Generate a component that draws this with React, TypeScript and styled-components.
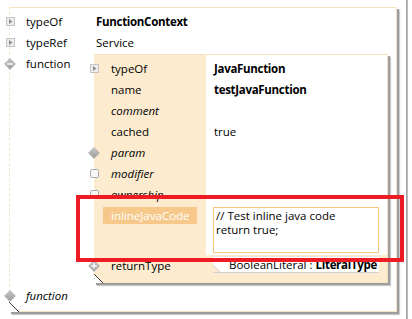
import styled, { createGlobalStyle } from 'styled-components';

const BEIGE = '#fcebcf';
const EDGE = '#f5e3c2';

const GlobalStyle = createGlobalStyle`
  html, body {
    margin: 0;
    padding: 0;
    background: #fff;
  }
  body {
    font-family: "Open Sans", "Noto Sans", sans-serif;
    font-size: 11.5px;
    color: #000;
  }
`;

const ExpandIcon = () => (
  <svg width="9" height="9" viewBox="0 0 9 9">
    <rect x="0.5" y="0.5" width="8" height="8" fill="#ededed" stroke="#c4c4c4" />
    <path d="M3 2 L6.5 4.5 L3 7 Z" fill="#8e8e8e" />
  </svg>
);

const CheckIcon = () => (
  <svg width="9" height="9" viewBox="0 0 9 9">
    <rect x="0.5" y="0.5" width="8" height="8" rx="1" fill="#f6f6f6" stroke="#a9a9a9" />
  </svg>
);

const Diamond = ({ mark }: { mark?: 'plus' | 'minus' }) => (
  <svg width="12" height="12" viewBox="0 0 12 12">
    <defs>
      <linearGradient id="diamond-fill" x1="0" y1="0" x2="0" y2="1">
        <stop offset="0" stopColor="#c6c6c6" />
        <stop offset="1" stopColor="#9a9a9a" />
      </linearGradient>
    </defs>
    <path
      d="M6 0.6 L11.4 6 L6 11.4 L0.6 6 Z"
      fill="url(#diamond-fill)"
      stroke="#adadad"
      strokeWidth="0.8"
      strokeLinejoin="round"
    />
    {mark && <rect x="3" y="5.3" width="6" height="1.4" fill="#fff" />}
    {mark === 'plus' && <rect x="5.3" y="3" width="1.4" height="6" fill="#fff" />}
  </svg>
);

const Page = styled.div`
  position: relative;
  display: flex;
  width: 412px;
  height: 319px;
  overflow: hidden;
`;

const Canvas = styled.div`
  padding: 7px 0 0 9px;
  width: 388px;
`;

const WindowEdge = styled.div`
  margin-left: 9px;
  width: 2px;
  background: linear-gradient(to right, #9c9c9c, #c4c4c4);
`;

const Frame = styled.div`
  position: relative;
  box-sizing: border-box;
  width: 388px;
  height: 305px;
  padding: 3px 0 5px;
  background: #fff;
  border-top: 1px solid ${EDGE};
  border-right: 1px solid ${EDGE};
  border-bottom: 1px solid ${EDGE};
  border-left: 1px dashed #f2e6cf;
  box-shadow: 2px 2px 0 #9d9d9d, 3px 3px 1px #c9c9c9;

  &::after {
    content: '';
    position: absolute;
    left: -1px;
    bottom: -1px;
    width: 10px;
    height: 10px;
    background: linear-gradient(
      to bottom left,
      transparent calc(50% - 0.7px),
      #3a3a3a calc(50% - 0.7px),
      #3a3a3a calc(50% + 0.7px),
      #fff calc(50% + 0.7px)
    );
  }
`;

const Row = styled.div<{ $height?: number }>`
  display: flex;
  align-items: flex-start;
  min-height: ${(p) => p.$height ?? 21}px;
`;

const Slot = styled.span`
  flex: 0 0 20px;
  margin-left: -10px;
  height: 21px;
  display: flex;
  align-items: center;
  justify-content: center;
`;

const Label = styled.span<{ $width: number; $indent: number; $italic?: boolean }>`
  flex: 0 0 ${(p) => p.$width}px;
  box-sizing: border-box;
  padding-left: ${(p) => p.$indent}px;
  height: 21px;
  line-height: 21px;
  white-space: nowrap;
  font-style: ${(p) => (p.$italic ? 'italic' : 'normal')};
`;

const Selected = styled.span`
  display: block;
  margin: 2px 9px 0 -8px;
  padding-left: 8px;
  height: 17px;
  line-height: 17px;
  background: #f6c98b;
  color: #fff;
`;

const Value = styled.span<{ $indent: number; $bold?: boolean }>`
  flex: 1;
  padding-left: ${(p) => p.$indent}px;
  line-height: 21px;
  white-space: nowrap;
  font-weight: ${(p) => (p.$bold ? 700 : 400)};
  letter-spacing: ${(p) => (p.$bold ? '-0.3px' : '0')};
`;

const Panel = styled.div`
  position: relative;
  flex: 1;
  margin: 1px 8px 2px 0;
  padding-bottom: 6px;
  background: ${BEIGE};
  border-top: 1px solid ${EDGE};
  border-right: 1px solid ${EDGE};
  border-bottom: 1px solid ${EDGE};
  box-shadow: 2px 2px 0 #9d9d9d, 3px 3px 1px #c9c9c9;

  &::after {
    content: '';
    position: absolute;
    left: 0;
    bottom: -1px;
    width: 9px;
    height: 9px;
    background: linear-gradient(
      to bottom left,
      transparent calc(50% - 0.7px),
      #3a3a3a calc(50% - 0.7px),
      #3a3a3a calc(50% + 0.7px),
      #fff calc(50% + 0.7px)
    );
  }
`;

const PanelBody = styled.div`
  padding-top: 3px;
  background: linear-gradient(to right, ${BEIGE} 112px, #fff 112px);
`;

const Cell = styled.div<{ $indent: number }>`
  flex: 1;
  padding: 2px 0 0 ${(p) => p.$indent}px;
`;

const CodeBox = styled.div`
  box-sizing: border-box;
  width: 166px;
  height: 46px;
  padding: 1px 2px;
  border: 1px solid #f7c780;
  background: #fff;
  line-height: 14px;
  white-space: pre;
`;

const RefBox = styled.div`
  position: relative;
  box-sizing: border-box;
  width: 166px;
  height: 17px;
  margin-top: -1px;
  padding-left: 16px;
  background: #fff;
  border-top: 1px solid #e6e6e6;
  border-bottom: 1px solid #d2d2d2;
  line-height: 15px;
  white-space: nowrap;
  overflow: hidden;

  &::before {
    content: '';
    position: absolute;
    left: 0;
    bottom: 0;
    width: 7px;
    height: 7px;
    background: linear-gradient(
      to bottom left,
      transparent calc(50% - 0.6px),
      #cfcfcf calc(50% - 0.6px),
      #cfcfcf calc(50% + 0.6px),
      ${BEIGE} calc(50% + 0.6px)
    );
  }

  b {
    font-weight: 700;
    letter-spacing: -0.3px;
  }
`;

const Annotation = styled.div`
  position: absolute;
  left: 76px;
  top: 195px;
  box-sizing: border-box;
  width: 328px;
  height: 67px;
  border: 4px solid #ed1c24;
  pointer-events: none;
`;

type Field = {
  name: string;
  value?: string;
  icon?: 'expand' | 'check' | 'diamond';
  italic?: boolean;
  bold?: boolean;
};

const fields: Field[] = [
  { name: 'typeOf', value: 'JavaFunction', icon: 'expand', bold: true },
  { name: 'name', value: 'testJavaFunction', bold: true },
  { name: 'comment', italic: true },
  { name: 'cached', value: 'true' },
  { name: 'param', icon: 'diamond', italic: true },
  { name: 'modifier', icon: 'check', italic: true },
  { name: 'ownership', icon: 'check', italic: true },
];

const renderIcon = (icon?: Field['icon']) => {
  if (icon === 'expand') return <ExpandIcon />;
  if (icon === 'check') return <CheckIcon />;
  if (icon === 'diamond') return <Diamond />;
  return null;
};

export default function App() {
  return (
    <Page>
      <GlobalStyle />
      <Canvas>
        <Frame>
          <Row>
            <Slot>
              <ExpandIcon />
            </Slot>
            <Label $width={74} $indent={6}>typeOf</Label>
            <Value $indent={2} $bold>FunctionContext</Value>
          </Row>
          <Row>
            <Slot>
              <ExpandIcon />
            </Slot>
            <Label $width={74} $indent={6}>typeRef</Label>
            <Value $indent={2}>Service</Value>
          </Row>
          <Row>
            <Slot>
              <Diamond mark="minus" />
            </Slot>
            <Label $width={74} $indent={6}>function</Label>
            <Panel>
              <PanelBody>
                {fields.map((field) => (
                  <Row key={field.name}>
                    <Slot>{renderIcon(field.icon)}</Slot>
                    <Label $width={102} $indent={7} $italic={field.italic}>
                      {field.name}
                    </Label>
                    <Value $indent={8} $bold={field.bold}>
                      {field.value}
                    </Value>
                  </Row>
                ))}
                <Row $height={50}>
                  <Slot />
                  <Label $width={102} $indent={7}>
                    <Selected>inlineJavaCode</Selected>
                  </Label>
                  <Cell $indent={7}>
                    <CodeBox>{'// Test inline java code\nreturn true;'}</CodeBox>
                  </Cell>
                </Row>
              </PanelBody>
              <Row>
                <Slot>
                  <Diamond mark="plus" />
                </Slot>
                <Label $width={102} $indent={7}>returnType</Label>
                <Cell $indent={7}>
                  <RefBox>
                    BooleanLiteral : <b>LiteralType</b>
                  </RefBox>
                </Cell>
              </Row>
            </Panel>
          </Row>
          <Row>
            <Slot>
              <Diamond />
            </Slot>
            <Label $width={74} $indent={6} $italic>function</Label>
          </Row>
        </Frame>
      </Canvas>
      <WindowEdge />
      <Annotation />
    </Page>
  );
}
